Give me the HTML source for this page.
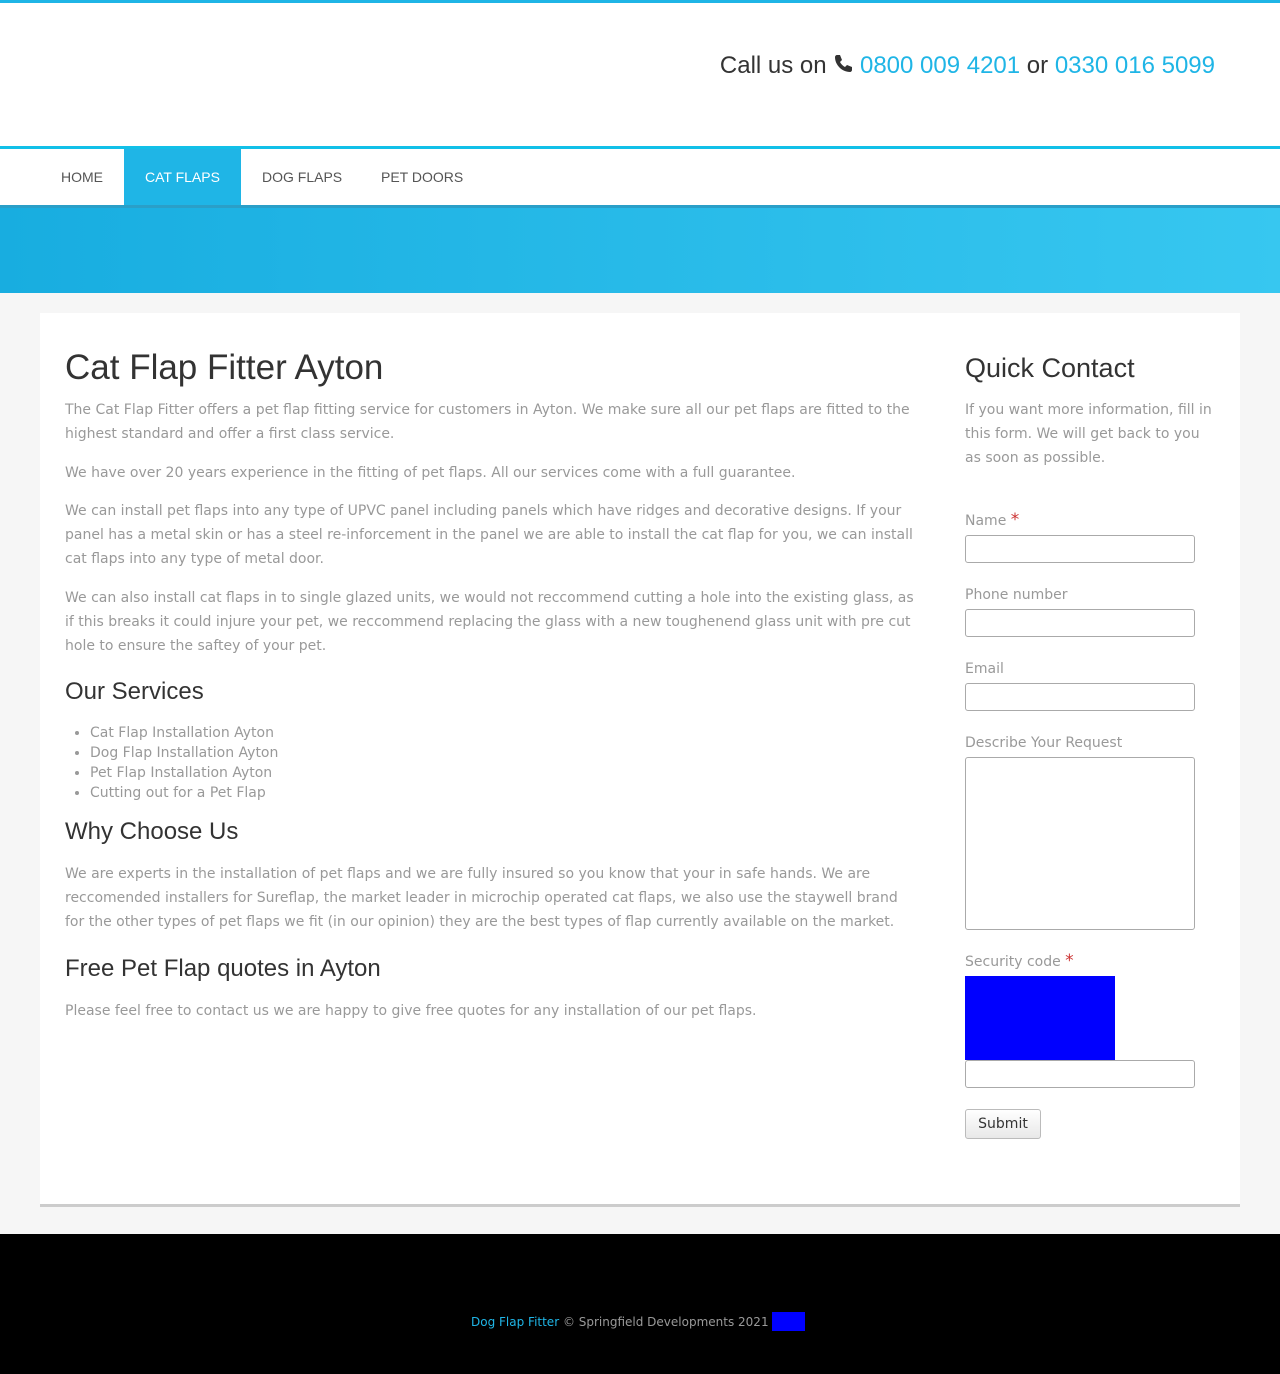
<!DOCTYPE html>
<html><head><meta charset="utf-8"><style>
*{box-sizing:border-box;margin:0;padding:0}
body{width:1280px;height:1374px;background:#f6f6f6;font-family:"DejaVu Sans",sans-serif;font-size:14px;color:#999;position:relative;overflow:hidden}
.top{position:absolute;top:0;left:0;width:1280px;height:146px;background:#fff;border-top:3px solid #1fb5e6}
.call{position:absolute;top:49px;right:65px;font-family:"Liberation Sans",sans-serif;font-size:24px;color:#333;font-weight:300}
.call a{color:#1fb5e6;text-decoration:none}
.nav{position:absolute;top:146px;left:0;width:1280px;height:62px;background:#fff;border-top:3px solid #12c0e8;border-bottom:3px solid #2a9fc8}
.nav span{position:absolute;top:0;height:56px;line-height:56px;font-family:"Liberation Sans",sans-serif;font-size:14px;color:#555;padding:0 21px}
.nav .act{background:#1fb5e6;color:#fff}
.banner{position:absolute;top:208px;left:0;width:1280px;height:85px;background:linear-gradient(90deg,#18ade0,#37c7f0)}
.box{position:absolute;top:313px;left:40px;width:1200px;height:894px;background:#fff;border-bottom:3px solid #ccc}
h1,h2,h3{font-family:"Liberation Sans",sans-serif;font-weight:300;color:#333;position:absolute}
.p{position:absolute;left:65px;width:852px;line-height:24px}
.lbl{position:absolute;left:965px}
.lbl b{color:#c33;font-weight:normal;font-size:17px}
.in{position:absolute;left:965px;width:230px;height:28px;border:1px solid #aaa;border-radius:3px;background:#fff}
ul{position:absolute;left:90px;top:723px;line-height:20px}
</style></head><body>
<div class="top"><div class="call">Call us on <svg width="20" height="20" viewBox="0 0 20 20" style="vertical-align:-1px"><path d="M4 1l3 0 2 5-2 2c1 2 3 4 5 5l2-2 5 2v3c0 1-1 2-2 2C9 18 2 11 2 3c0-1 1-2 2-2z" fill="#333"/></svg> <a>0800 009 4201</a> or <a>0330 016 5099</a></div></div>
<div class="nav"><span style="left:40px">HOME</span><span class="act" style="left:124px">CAT FLAPS</span><span style="left:241px">DOG FLAPS</span><span style="left:360px">PET DOORS</span></div>
<div class="banner"></div>
<div class="box"></div>
<h1 style="left:65px;top:348px;font-size:35px">Cat Flap Fitter Ayton</h1>
<div class="p" style="top:398px">The Cat Flap Fitter offers a pet flap fitting service for customers in Ayton. We make sure all our pet flaps are fitted to the highest standard and offer a first class service.</div>
<div class="p" style="top:461px">We have over 20 years experience in the fitting of pet flaps. All our services come with a full guarantee.</div>
<div class="p" style="top:499px">We can install pet flaps into any type of UPVC panel including panels which have ridges and decorative designs. If your panel has a metal skin or has a steel re-inforcement in the panel we are able to install the cat flap for you, we can install cat flaps into any type of metal door.</div>
<div class="p" style="top:586px">We can also install cat flaps in to single glazed units, we would not reccommend cutting a hole into the existing glass, as if this breaks it could injure your pet, we reccommend replacing the glass with a new toughenend glass unit with pre cut hole to ensure the saftey of your pet.</div>
<h2 style="left:65px;top:678px;font-size:24px">Our Services</h2>
<ul><li>Cat Flap Installation Ayton</li><li>Dog Flap Installation Ayton</li><li>Pet Flap Installation Ayton</li><li>Cutting out for a Pet Flap</li></ul>
<h2 style="left:65px;top:818px;font-size:24px">Why Choose Us</h2>
<div class="p" style="top:862px">We are experts in the installation of pet flaps and we are fully insured so you know that your in safe hands. We are reccomended installers for Sureflap, the market leader in microchip operated cat flaps, we also use the staywell brand for the other types of pet flaps we fit (in our opinion) they are the best types of flap currently available on the market.</div>
<h2 style="left:65px;top:955px;font-size:24px">Free Pet Flap quotes in Ayton</h2>
<div class="p" style="top:999px">Please feel free to contact us we are happy to give free quotes for any installation of our pet flaps.</div>
<h2 style="left:965px;top:353px;font-size:27px">Quick Contact</h2>
<div class="p" style="left:965px;width:250px;top:398px">If you want more information, fill in this form. We will get back to you as soon as possible.</div>
<div class="lbl" style="top:510px">Name <b>*</b></div><div class="in" style="top:535px"></div>
<div class="lbl" style="top:587px">Phone number</div><div class="in" style="top:609px"></div>
<div class="lbl" style="top:661px">Email</div><div class="in" style="top:683px"></div>
<div class="lbl" style="top:735px">Describe Your Request</div><div class="in" style="top:757px;height:173px"></div>
<div class="lbl" style="top:951px">Security code <b>*</b></div>
<div style="position:absolute;left:965px;top:976px;width:150px;height:84px;background:#00f"></div>
<div class="in" style="top:1060px"></div>
<div style="position:absolute;left:965px;top:1109px;width:76px;height:30px;border:1px solid #bbb;border-radius:3px;background:linear-gradient(#fff,#e8e8e8);color:#333;text-align:center;line-height:29px">Submit</div>
<div style="position:absolute;top:1234px;left:0;width:1280px;height:140px;background:#000"></div>
<div style="position:absolute;top:1312px;left:471px;font-size:12px;color:#999"><span style="color:#1fb5e6">Dog Flap Fitter</span> © Springfield Developments 2021 <span style="display:inline-block;width:33px;height:19px;background:#00f;vertical-align:-5px"></span></div>
</body></html>
